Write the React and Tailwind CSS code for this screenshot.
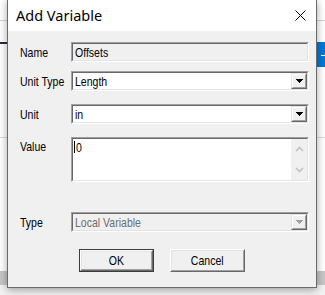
import React from "react";

function T({ children, center }) {
  return (
    <span className={`inline-block whitespace-nowrap scale-x-[0.81] ${center ? "origin-center" : "origin-left"}`}>
      {children}
    </span>
  );
}

function Sunken({ className = "", inner = "", children }) {
  return (
    <div className={`border border-t-[#a0a0a0] border-l-[#a0a0a0] border-b-white border-r-white ${className}`}>
      <div className={`border border-t-[#696969] border-l-[#696969] border-b-[#e3e3e3] border-r-[#e3e3e3] h-full w-full flex ${inner}`}>
        {children}
      </div>
    </div>
  );
}

function DropBtn({ disabled }) {
  return (
    <div className="w-[16px] h-full border border-t-[#e3e3e3] border-l-[#e3e3e3] border-b-[#696969] border-r-[#696969] bg-[#f0f0f0]">
      <div className="w-full h-full border border-t-white border-l-white border-b-[#a0a0a0] border-r-[#a0a0a0] flex items-center justify-center">
        <svg width="7" height="4" viewBox="0 0 7 4" shapeRendering="crispEdges">
          <path d="M0 0h7v1h-1v1h-1v1h-1v1h-1v-1h-1v-1h-1v-1h-1z" fill={disabled ? "#a0a0a0" : "#000"} />
        </svg>
      </div>
    </div>
  );
}

function Combo({ text, disabled }) {
  return (
    <Sunken className="w-[238px] h-[20px]" inner={disabled ? "bg-[#f0f0f0]" : "bg-white"}>
      <div className={`flex-1 flex items-center pl-[2px] text-[13px] leading-none ${disabled ? "text-[#6d6d6d]" : "text-black"}`}>
        <T>{text}</T>
      </div>
      <DropBtn disabled={disabled} />
    </Sunken>
  );
}

function Label({ children, className = "" }) {
  return (
    <div className={`w-[51px] text-[13px] leading-none text-black ${className}`}>
      <T>{children}</T>
    </div>
  );
}

function Button({ children, isDefault }) {
  return (
    <div className={`w-[75px] h-[23px] ${isDefault ? "border border-[#3c3c3c]" : ""}`}>
      <div className="w-full h-full border border-t-white border-l-white border-b-[#696969] border-r-[#696969] bg-[#f0f0f0]">
        <div className="w-full h-full border border-t-[#e3e3e3] border-l-[#e3e3e3] border-b-[#a0a0a0] border-r-[#a0a0a0] flex items-center justify-center text-[13px] leading-none text-black">
          <T center>{children}</T>
        </div>
      </div>
    </div>
  );
}

export default function App() {
  return (
    <div className="relative w-[325px] h-[295px] overflow-hidden bg-white font-['Liberation_Sans',Arial,sans-serif]">
      {/* background application behind the dialog */}
      <div className="absolute left-0 top-[20px] w-full h-px bg-[#d4d4d4]" />
      <div className="absolute left-0 top-[42px] w-[10px] h-[2px] bg-[#1c2f45]" />
      <div className="absolute left-[316px] top-[42px] w-[9px] h-[25px] bg-[#0078d7]">
        <div className="absolute left-[5px] top-[13px] w-[4px] h-px bg-white" />
      </div>
      <div className="absolute left-0 top-[137px] w-full h-px bg-[#dcdcdc]" />
      <div className="absolute left-0 top-[271px] w-full h-[14px] bg-[#c6c6c6]" />
      <div className="absolute left-0 top-[285px] w-full h-[10px] bg-[#f2f2f2]" />

      {/* dialog window */}
      <div className="absolute left-[7px] top-[-1px] w-[310px] h-[289px] border border-[#6a6a6a] bg-[#f0f0f0] shadow-[0_2px_8px_rgba(0,0,0,0.35)] flex flex-col">
        <div className="h-[31px] bg-white flex items-center pl-[8px] pr-[9px]">
          <div className="flex-1 font-['Noto_Sans','Open_Sans',sans-serif] text-[14.5px] leading-none text-black">Add Variable</div>
          <svg width="11" height="11" viewBox="0 0 11 11" className="mr-[1px]">
            <path d="M0.5 0.5L10.5 10.5M10.5 0.5L0.5 10.5" stroke="#000" strokeWidth="1" />
          </svg>
        </div>

        <div className="flex-1 flex flex-col pt-[11px]">
          <div className="flex items-center pl-[12px]">
            <Label>Name</Label>
            <Sunken className="w-[238px] h-[20px]" inner="bg-[#f0f0f0]">
              <div className="flex-1 flex items-center pl-[2px] text-[13px] leading-none text-black">
                <T>Offsets</T>
              </div>
            </Sunken>
          </div>

          <div className="flex items-center pl-[12px] mt-[9px]">
            <Label>Unit Type</Label>
            <Combo text="Length" />
          </div>

          <div className="flex items-center pl-[12px] mt-[13px]">
            <Label>Unit</Label>
            <Combo text="in" />
          </div>

          <div className="flex items-start pl-[12px] mt-[13px]">
            <Label className="pt-[3px]">Value</Label>
            <Sunken className="w-[238px] h-[45px]" inner="bg-white">
              <div className="flex-1 pl-px pt-[2px] text-[13px] leading-[13px] text-black flex items-start">
                <span className="inline-block w-px h-[12px] bg-black mr-[1px]" />
                <T>0</T>
              </div>
              <div className="w-[16px] h-full bg-[#f0f0f0] flex flex-col items-center justify-between py-[7px]">
                <svg width="9" height="6" viewBox="0 0 9 6">
                  <path d="M1 5L4.5 1.5L8 5" stroke="#c2c2c2" strokeWidth="1.6" fill="none" />
                </svg>
                <svg width="9" height="6" viewBox="0 0 9 6">
                  <path d="M1 1L4.5 4.5L8 1" stroke="#c2c2c2" strokeWidth="1.6" fill="none" />
                </svg>
              </div>
            </Sunken>
          </div>

          <div className="flex items-center pl-[12px] mt-[30px]">
            <Label>Type</Label>
            <Combo text="Local Variable" disabled />
          </div>

          <div className="flex justify-center gap-[16px] mt-[17px]">
            <Button isDefault>OK</Button>
            <Button>Cancel</Button>
          </div>
        </div>
      </div>
    </div>
  );
}
